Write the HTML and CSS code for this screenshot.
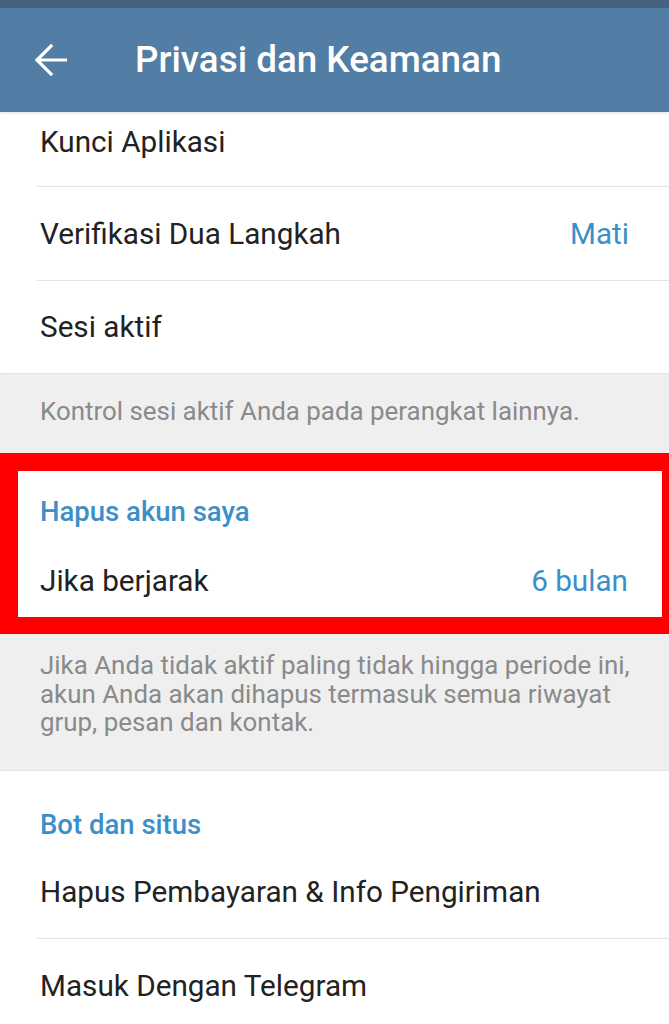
FILE: index.html
```html
<!DOCTYPE html>
<html lang="id">
<head>
<meta charset="utf-8">
<title>Privasi dan Keamanan</title>
<link rel="stylesheet" href="styles.css">
</head>
<body>
<div class="screen">
  <div class="statusbar"></div>
  <header class="appbar">
    <svg class="back" width="32" height="32" viewBox="0 0 32 32" aria-hidden="true">
      <path d="M2 16 H31 M16 2 L2 16 L16 30" fill="none" stroke="#fff" stroke-width="3.2" stroke-linecap="square" stroke-linejoin="miter"/>
    </svg>
    <h1 class="title">Privasi dan Keamanan</h1>
  </header>

  <section class="card">
    <div class="row row-first"><span class="label">Kunci Aplikasi</span></div>
    <div class="divider"></div>
    <div class="row"><span class="label">Verifikasi Dua Langkah</span><span class="value">Mati</span></div>
    <div class="divider"></div>
    <div class="row row-last"><span class="label">Sesi aktif</span></div>
  </section>

  <div class="info info-short">Kontrol sesi aktif Anda pada perangkat lainnya.</div>

  <section class="card highlight">
    <div class="section-head head-boxed">Hapus akun saya</div>
    <div class="row row-boxed"><span class="label">Jika berjarak</span><span class="value">6 bulan</span></div>
  </section>

  <div class="info info-long">Jika Anda tidak aktif paling tidak hingga periode ini,<br>akun Anda akan dihapus termasuk semua riwayat<br>grup, pesan dan kontak.</div>

  <section class="card">
    <div class="section-head">Bot dan situs</div>
    <div class="row"><span class="label">Hapus Pembayaran &amp; Info Pengiriman</span></div>
    <div class="divider"></div>
    <div class="row"><span class="label">Masuk Dengan Telegram</span></div>
  </section>
</div>
</body>
</html>
```

FILE: styles.css
```css
html, body {
  margin: 0;
  padding: 0;
  background: #ffffff;
}

.screen {
  width: 669px;
  height: 1024px;
  overflow: hidden;
  font-family: Roboto, "Noto Sans", "Liberation Sans", sans-serif;
  background: #ffffff;
}

.statusbar {
  height: 8px;
  background: #46627f;
}

.appbar {
  height: 104px;
  background: #527da4;
  display: flex;
  align-items: center;
  padding-left: 35px;
  box-shadow: 0 1px 3px rgba(0, 0, 0, 0.12);
  position: relative;
  z-index: 1;
}

.back {
  display: block;
  flex: none;
}

.title {
  margin: 0 0 0 68px;
  color: #ffffff;
  font-size: 36.8px;
  font-weight: 500;
  line-height: 40px;
}

.card {
  background: #ffffff;
}

.row {
  height: 93px;
  display: flex;
  align-items: center;
  justify-content: space-between;
  padding: 0 40px;
  font-size: 29.7px;
  line-height: 32px;
  color: #222222;
  white-space: nowrap;
}

.row-first {
  height: 60px;
  padding-bottom: 14px;
}

.row-last {
  height: 92px;
}

.value {
  color: #3c8fc8;
}

.divider {
  height: 1px;
  margin-left: 37px;
  background: #e4e4e4;
}

.info {
  background: #efefef;
  color: #8a8a8a;
  font-size: 25.9px;
  line-height: 28.8px;
  padding: 0 20px 0 40px;
  white-space: nowrap;
}

.info-short {
  padding-top: 24px;
  padding-bottom: 27px;
  box-shadow: inset 0 2px 2px -1px rgba(0, 0, 0, 0.06);
}

.info-long {
  padding-top: 17px;
  padding-bottom: 34px;
  box-shadow: inset 0 -2px 2px -1px rgba(0, 0, 0, 0.05);
}

.section-head {
  color: #3c8fc8;
  font-size: 27.5px;
  font-weight: 500;
  line-height: 28px;
  padding: 40px 40px 6px;
}

.highlight {
  border-style: solid;
  border-color: #ff0000;
  border-width: 18px 7px 17px 18px;
}

.head-boxed {
  padding: 27px 22px 5px;
}

.row-boxed {
  height: 86px;
  padding: 14px 34px 0 22px;
  box-sizing: border-box;
}
```
